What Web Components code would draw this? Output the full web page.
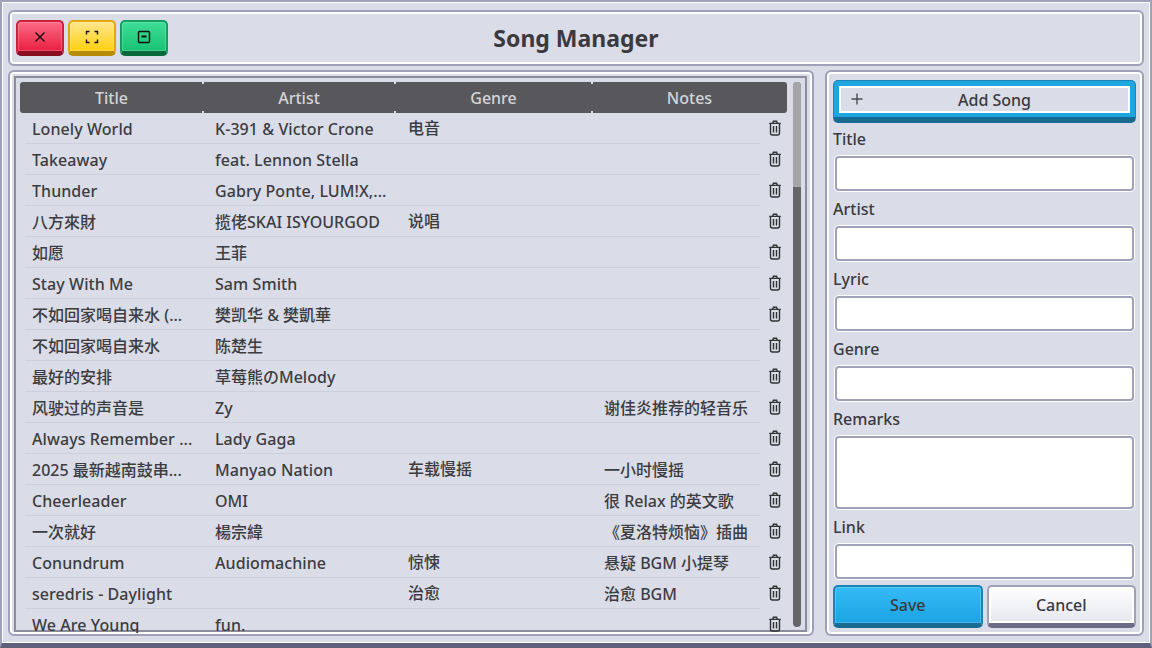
<!DOCTYPE html>
<html>
<head>
<meta charset="utf-8">
<title>Song Manager</title>
<style>
    html, body { margin: 0; height: 100%; overflow: hidden; }
    body { font-family: "Noto Sans", "Noto Sans CJK SC", sans-serif; color: #3a3a3e; }
</style>
</head>
<body>
<song-manager></song-manager>

<script>
const icons = {
    close: `<path d="M3.5 3.5 L12.5 12.5 M12.5 3.5 L3.5 12.5" />`,
    full: `<path d="M2.5 5.5 V2.5 H5.5 M10.5 2.5 H13.5 V5.5 M13.5 10.5 V13.5 H10.5 M5.5 13.5 H2.5 V10.5" />`,
    mini: `<rect x="2.5" y="2.5" width="11" height="11" rx="1" /><path d="M5.5 7.5 H10.5" stroke-width="2" />`,
    plus: `<path d="M8 2.5 V13.5 M2.5 8 H13.5" />`,
    trash: `<path d="M5.8 3 L6.4 1.2 H9.6 L10.2 3 M2.2 3.4 H13.8 M3.5 3.4 V13 Q3.5 15 5.5 15 H10.5 Q12.5 15 12.5 13 V3.4 M6.5 6 V12.5 M9.5 6 V12.5" />`
};
const icon = name => `<svg viewBox="0 0 16 16" width="16" height="16" fill="none" stroke="currentColor" stroke-width="1.4">${icons[name]}</svg>`;

const palette = {
    red: ['#fb6a84', '#ea1f42', '#cf1f3d', '#8a0c22'],
    yellow: ['#ffe68c', '#ffd00f', '#e3a512', '#b98a08'],
    green: ['#3ddd97', '#19c274', '#0fa061', '#08693c'],
    blue: ['#35bbf6', '#1ba3e3', '#1c84b6', '#186a91'],
    white: ['#ffffff', '#e6e7ef', '#a0a0b8', '#6c6c86']
};

class WindowButton extends HTMLElement {
    connectedCallback() {
        const c = palette[this.getAttribute('color')];
        this.attachShadow({mode: 'open'}).innerHTML = `
            <style>
                :host { display: flex; align-items: center; justify-content: center; box-sizing: border-box;
                    width: 48px; height: 36px; color: #111; border-radius: 5px;
                    border: 2px solid ${c[2]}; border-bottom: 5px solid ${c[3]};
                    box-shadow: inset 0 0 0 1px rgba(255,255,255,.2);
                    background: linear-gradient(${c[0]}, ${c[1]}); }
                svg { display: block; }
            </style>
            ${icon(this.getAttribute('icon'))}`;
    }
}
customElements.define('window-button', WindowButton);

class ActionButton extends HTMLElement {
    connectedCallback() {
        const c = palette[this.getAttribute('color')];
        const inner = this.getAttribute('color') == 'white' ? '0 0 0 2px #fff' : '0 0 0 1px rgba(255,255,255,.2)';
        this.attachShadow({mode: 'open'}).innerHTML = `
            <style>
                :host { flex: 1 1 0; display: flex; align-items: center; justify-content: center; box-sizing: border-box;
                    height: 43px; padding-bottom: 1px; font-size: 16px; font-weight: 500; color: #3a3a3e; border-radius: 5px;
                    border: 2px solid ${c[2]}; border-bottom: 5px solid ${c[3]};
                    box-shadow: inset ${inner};
                    background: linear-gradient(${c[0]}, ${c[1]}); }
            </style>
            <slot></slot>`;
    }
}
customElements.define('action-button', ActionButton);

class AddButton extends HTMLElement {
    constructor() {
        super();
        this.attachShadow({mode: 'open'}).innerHTML = `
            <style>
                :host { display: block; box-sizing: border-box; height: 43px; border-radius: 5px; padding: 5px 5px 4px;
                    background: #1ea6e0; border: 1px solid #1c84b6; border-bottom: 6px solid #186a91; }
                div { position: relative; display: flex; align-items: center; justify-content: center; box-sizing: border-box;
                    height: 100%; padding-left: 20px; background: #dadce8; border: 2px solid #fff; font-size: 16px; font-weight: 500; color: #3a3a3e; }
                svg { position: absolute; left: 8px; top: 3px; color: #4a4a50; }
            </style>
            <div>${icon('plus')}<slot></slot></div>`;
    }
}
customElements.define('add-button', AddButton);

class TitleBar extends HTMLElement {
    constructor() {
        super();
        this.attachShadow({mode: 'open'}).innerHTML = `
            <style>
                :host { display: grid; grid-template-columns: 1fr auto 1fr; align-items: center; box-sizing: border-box;
                    height: 56px; padding: 0 6px; border: 2px solid #a0a0b8; box-shadow: inset 0 0 0 2px #fff; border-radius: 6px; }
                .buttons { display: flex; gap: 4px; }
                h1 { margin: 0; font-size: 23px; line-height: 32px; font-weight: 700; color: #3a3a3e; }
            </style>
            <div class="buttons">
                <window-button color="red" icon="close"></window-button>
                <window-button color="yellow" icon="full"></window-button>
                <window-button color="green" icon="mini"></window-button>
            </div>
            <h1><slot></slot></h1>
            <div></div>`;
    }
}
customElements.define('title-bar', TitleBar);

class SongRow extends HTMLElement {
    connectedCallback() {
        // latin only cells run a touch wider in the reference
        const cell = name => {
            const text = this.getAttribute(name) || '';
            return `<span class="${/[^\x00-\x7f]/.test(text) ? 'cjk' : 'latin'}">${text}</span>`;
        };
        this.attachShadow({mode: 'open'}).innerHTML = `
            <style>
                :host { display: grid; grid-template-columns: 183px 193px 196px 1fr 26px; flex: none; height: 31px;
                    align-items: center; font-size: 16px; line-height: 22px; font-weight: 500; color: #3c3c40; position: relative; }
                :host::after { content: ""; position: absolute; left: 5px; width: 735px; bottom: 0; height: 1px; background: #cdcfdb; }
                span { padding-left: 12px; white-space: nowrap; }
                .latin { letter-spacing: .07px; }
                span:nth-of-type(3) { padding-bottom: 2px; }
                svg { display: block; color: #333; margin: -1px 0 0 6px; }
            </style>
            ${cell('name')}${cell('artist')}${cell('genre')}${cell('notes')}
            ${icon('trash')}`;
    }
}
customElements.define('song-row', SongRow);

class SongTable extends HTMLElement {
    constructor() {
        super();
        this.attachShadow({mode: 'open'}).innerHTML = `
            <style>
                :host { display: flex; flex: 1; min-width: 0; gap: 6px; }
                .table { flex: 1; min-width: 0; display: flex; flex-direction: column; overflow: hidden; margin-bottom: -3px; }
                .head { flex: none; display: grid; grid-template-columns: 183px 192px 197px 1fr; height: 31px; border-radius: 3px;
                    background: #58585c; color: #d4d4d8; font-size: 16px; font-weight: 500; text-align: center; }
                .head span { position: relative; height: 31px; line-height: 33px; }
                .head span + span::before, .head span + span::after { content: ""; position: absolute; left: -1px; width: 2px; height: 2px; background: #dadce8; }
                .head span + span::before { top: 0; }
                .head span + span::after { bottom: 0; }
                .bar { flex: none; width: 8px; margin-bottom: 3px; border-radius: 4px; background: #666669; overflow: hidden; }
                .thumb { height: 105px; background: #a6a6a8; }
            </style>
            <div class="table">
                <div class="head"><span>Title</span><span>Artist</span><span>Genre</span><span>Notes</span></div>
                <slot></slot>
            </div>
            <div class="bar"><div class="thumb"></div></div>`;
    }
}
customElements.define('song-table', SongTable);

class FormField extends HTMLElement {
    connectedCallback() {
        const big = this.hasAttribute('multiline');
        this.attachShadow({mode: 'open'}).innerHTML = `
            <style>
                :host { display: block; font-size: 16px; font-weight: 500; color: #3a3a3e; }
                label { display: block; height: 24px; line-height: 24px; margin-bottom: 5px; }
                input, textarea { display: block; box-sizing: border-box; width: 299px; margin: 0 0 0 2px; height: ${big ? 73 : 35}px;
                    border: 2px solid #a0a0b8; border-radius: 4px; background: #fff; box-shadow: 0 0 0 1px #fff; outline: none; resize: none; }
            </style>
            <label>${this.getAttribute('label')}</label>
            ${big ? '<textarea></textarea>' : '<input type="text">'}`;
    }
}
customElements.define('form-field', FormField);

class SongForm extends HTMLElement {
    constructor() {
        super();
        this.attachShadow({mode: 'open'}).innerHTML = `
            <style>
                :host { display: flex; flex-direction: column; box-sizing: border-box; padding: 8px 6px 0; height: 566px;
                    border: 2px solid #a0a0b8; box-shadow: inset 0 0 0 2px #fff; border-radius: 6px; }
                .fields { display: flex; flex-direction: column; gap: 6px; margin-top: 4px; }
                .foot { display: flex; gap: 4px; margin-top: 6px; }
            </style>
            <add-button>Add Song</add-button>
            <div class="fields">
                <form-field label="Title"></form-field>
                <form-field label="Artist"></form-field>
                <form-field label="Lyric"></form-field>
                <form-field label="Genre"></form-field>
                <form-field label="Remarks" multiline></form-field>
                <form-field label="Link"></form-field>
            </div>
            <div class="foot">
                <action-button color="blue">Save</action-button>
                <action-button color="white">Cancel</action-button>
            </div>`;
    }
}
customElements.define('song-form', SongForm);

class ListPanel extends HTMLElement {
    constructor() {
        super();
        this.attachShadow({mode: 'open'}).innerHTML = `
            <style>
                :host { display: flex; box-sizing: border-box; height: 566px; padding: 4px 5px 4px 4px;
                    border: 2px solid #a0a0b8; box-shadow: inset 0 0 0 2px #fff; border-radius: 6px; }
                .frame { flex: 1; min-width: 0; display: flex; box-sizing: border-box; height: 556px; padding: 4px 4px 0 4px;
                    border: 2px solid #8c8c9c; }
            </style>
            <div class="frame"><slot></slot></div>`;
    }
}
customElements.define('list-panel', ListPanel);

const songs = [
    ['Lonely World', 'K-391 &amp; Victor Crone', '电音', ''],
    ['Takeaway', 'feat. Lennon Stella', '', ''],
    ['Thunder', 'Gabry Ponte, LUM!X,...', '', ''],
    ['八方來財', '揽佬SKAI ISYOURGOD', '说唱', ''],
    ['如愿', '王菲', '', ''],
    ['Stay With Me', 'Sam Smith', '', ''],
    ['不如回家喝自来水 (...', '樊凯华 &amp; 樊凱華', '', ''],
    ['不如回家喝自来水', '陈楚生', '', ''],
    ['最好的安排', '草莓熊のMelody', '', ''],
    ['风驶过的声音是', 'Zy', '', '谢佳炎推荐的轻音乐'],
    ['Always Remember ...', 'Lady Gaga', '', ''],
    ['2025 最新越南鼓串...', 'Manyao Nation', '车载慢摇', '一小时慢摇'],
    ['Cheerleader', 'OMI', '', '很 Relax 的英文歌'],
    ['一次就好', '楊宗緯', '', '《夏洛特烦恼》插曲'],
    ['Conundrum', 'Audiomachine', '惊悚', '悬疑 BGM 小提琴'],
    ['seredris - Daylight', '', '治愈', '治愈 BGM'],
    ['We Are Young', 'fun.', '', '']
];

class SongManager extends HTMLElement {
    constructor() {
        super();
        const rows = songs.map(s => `<song-row name="${s[0]}" artist="${s[1]}" genre="${s[2]}" notes="${s[3]}"></song-row>`).join('');
        this.attachShadow({mode: 'open'}).innerHTML = `
            <style>
                :host { display: block; box-sizing: border-box; width: 1152px; height: 648px; background: #dadce8;
                    border: 2px solid #a0a0b8; border-bottom: 5px solid #60607a; padding: 8px 6px 0; box-shadow: inset 0 0 0 1px #fff; }
                .main { display: grid; grid-template-columns: 806px 319px; justify-content: space-between; margin-top: 4px; }
            </style>
            <title-bar>Song Manager</title-bar>
            <div class="main">
                <list-panel><song-table>${rows}</song-table></list-panel>
                <song-form></song-form>
            </div>`;
    }
}
customElements.define('song-manager', SongManager);
</script>
</body>
</html>
